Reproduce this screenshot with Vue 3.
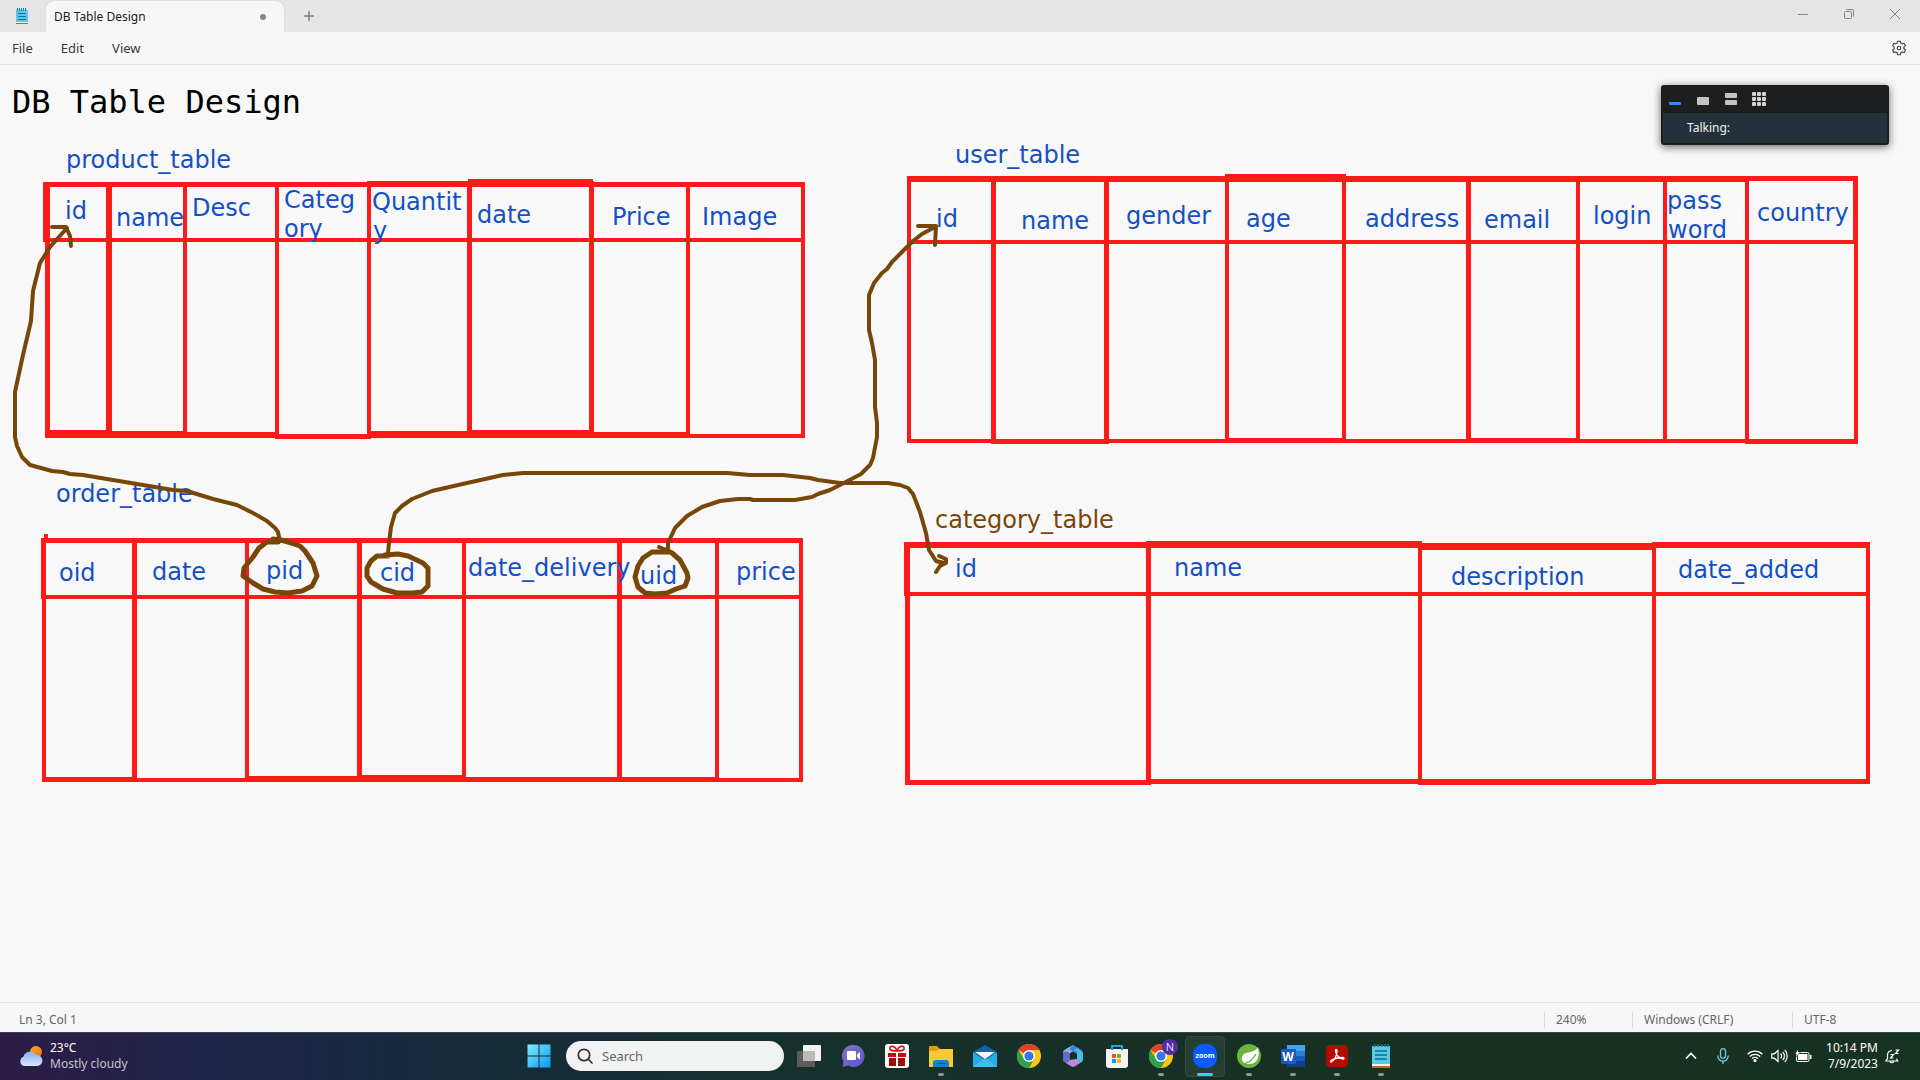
<script setup>
import { ref } from 'vue'

const note = ref('DB Table Design')

// Filled strokes of the red pen: left, top, right, bottom
const strokes = [
  // product_table
  [43, 182, 367, 187], [367, 181, 468, 187], [468, 179, 593, 187], [593, 182, 805, 187],
  [43, 182, 50, 242], [45, 242, 50, 438], [43, 238, 805, 242],
  [106, 182, 112, 438], [183, 182, 187, 438], [275, 182, 279, 439], [367, 181, 371, 439],
  [467, 181, 472, 438], [589, 181, 594, 438], [686, 182, 690, 438], [801, 182, 805, 438],
  [45, 430, 112, 438], [112, 431, 187, 438], [187, 432, 275, 438], [275, 434, 371, 439],
  [371, 431, 467, 438], [467, 430, 594, 438], [594, 432, 690, 438], [690, 434, 805, 438],
  // user_table
  [907, 176, 1745, 182], [1745, 176, 1858, 181], [1225, 174, 1346, 182], [907, 240, 1858, 244],
  [907, 176, 911, 443], [991, 176, 996, 444], [1104, 176, 1109, 444], [1225, 174, 1229, 443],
  [1342, 174, 1346, 443], [1466, 176, 1471, 443], [1576, 176, 1580, 443], [1663, 176, 1667, 443],
  [1745, 176, 1749, 443], [1853, 176, 1858, 242], [1854, 242, 1858, 444],
  [907, 439, 1858, 443], [991, 439, 1109, 444], [1225, 438, 1346, 443], [1466, 438, 1580, 443], [1745, 440, 1858, 444],
  // order_table
  [44, 534, 48, 538], [41, 538, 803, 543], [41, 538, 46, 599], [42, 599, 46, 782], [41, 595, 803, 599],
  [132, 538, 137, 782], [245, 538, 249, 782], [357, 538, 362, 782], [462, 538, 466, 782],
  [617, 538, 622, 782], [715, 538, 719, 782], [799, 538, 803, 782],
  [42, 777, 137, 782], [137, 778, 245, 782], [245, 776, 362, 782], [362, 775, 466, 782],
  [466, 777, 719, 782], [719, 778, 803, 782],
  // category_table
  [904, 542, 1146, 548], [1146, 541, 1422, 548], [1422, 543, 1652, 550], [1652, 542, 1870, 548], [904, 542, 910, 596],
  [905, 596, 910, 784], [904, 592, 1870, 596], [1146, 541, 1151, 785], [1418, 541, 1422, 785],
  [1652, 543, 1656, 785], [1866, 542, 1870, 784],
  [905, 780, 1151, 785], [1146, 779, 1870, 784], [1418, 780, 1656, 785]
]

const labels = [
  { x: 66, y: 168, t: 'product_table' },
  { x: 65, y: 219, t: 'id' }, { x: 116, y: 226, t: 'name' }, { x: 192, y: 216, t: 'Desc' },
  { x: 284, y: 208, t: 'Categ' }, { x: 284, y: 237, t: 'ory' },
  { x: 372, y: 210, t: 'Quantit' }, { x: 373, y: 239, t: 'y' },
  { x: 477, y: 223, t: 'date' }, { x: 612, y: 225, t: 'Price' }, { x: 702, y: 225, t: 'Image' },
  { x: 955, y: 163, t: 'user_table' },
  { x: 936, y: 227, t: 'id' }, { x: 1021, y: 229, t: 'name' }, { x: 1126, y: 224, t: 'gender' },
  { x: 1246, y: 227, t: 'age' }, { x: 1365, y: 227, t: 'address' }, { x: 1484, y: 228, t: 'email' },
  { x: 1593, y: 224, t: 'login' }, { x: 1667, y: 209, t: 'pass' }, { x: 1668, y: 238, t: 'word' },
  { x: 1757, y: 221, t: 'country' },
  { x: 56, y: 502, t: 'order_table' },
  { x: 59, y: 581, t: 'oid' }, { x: 152, y: 580, t: 'date' }, { x: 266, y: 579, t: 'pid' },
  { x: 380, y: 581, t: 'cid' }, { x: 468, y: 576, t: 'date_delivery' }, { x: 640, y: 584, t: 'uid' },
  { x: 736, y: 580, t: 'price' },
  { x: 935, y: 528, t: 'category_table', brown: true },
  { x: 955, y: 577, t: 'id' }, { x: 1174, y: 576, t: 'name' }, { x: 1451, y: 585, t: 'description' },
  { x: 1678, y: 578, t: 'date_added' }
]

const links = [
  '279,537 278,532 275,528 267,521 253,513 237,505 213,499 187,491 173,490 137,484 107,479 83,475 70,474 63,472 52,471 30,465 22,457 17,446 15,437 15,392 18,378 23,355 31,321 33,291 40,263 50,247 67,228',
  '52,227 66,227 70,236 71,246',
  '388,553 389,543 391,527 395,513 402,506 412,499 432,491 467,483 503,475 523,473 727,473 750,475 783,475 810,478 818,480 840,483 888,483 900,485 908,488 913,494 920,512 926,533 929,550 936,561 944,563',
  '939,556 946,559 946,563 940,566 936,572',
  '668,550 668,543 675,528 687,516 702,507 720,501 738,499 750,499 753,500 795,500 812,497 818,494 830,490 840,485 861,474 870,465 873,458 877,437 877,423 875,407 875,360 872,343 869,330 869,295 874,283 882,273 887,269 892,262 902,252 913,241 922,234 935,227',
  '918,226 936,226 935,245',
  '659,547 668,551'
]
const rings = [
  '278,542 267,542 259,548 253,557 244,568 243,576 253,583 263,589 275,592 288,593 302,591 312,586 317,576 313,563 305,551 300,546 288,542 281,540 273,539',
  '388,556 377,556 371,561 367,568 367,576 371,582 383,589 397,593 413,593 422,592 428,586 428,568 423,563 408,556 398,554 385,555',
  '668,552 652,552 643,558 638,566 635,577 638,587 645,593 655,594 667,593 676,589 685,586 688,578 687,573 680,560 672,553 666,550'
]

const running = ['explorer', 'profile', 'zoom', 'spring', 'word', 'acrobat', 'notepad']
const apps = [
  ['taskview', 'Task View'], ['chat', 'Chat'], ['gift', 'Rewards'], ['explorer', 'File Explorer'],
  ['mail', 'Mail'], ['chrome', 'Google Chrome'], ['m365', 'Microsoft 365'], ['store', 'Microsoft Store'],
  ['profile', 'Google Chrome, profile N'], ['zoom', 'Zoom'], ['spring', 'Spring Tool Suite'],
  ['word', 'Word'], ['acrobat', 'Adobe Acrobat'], ['notepad', 'Notepad']
]
</script>

<template>
  <div class="screen">
    <header class="titlebar">
      <svg class="app-icon" viewBox="0 0 12 16" aria-hidden="true">
        <rect y="2" width="12" height="12" fill="#5ac8e6" />
        <path d="M1.500 0v3M3.500 0v3M5.500 0v3M7.500 0v3M9.500 0v3" stroke="#137a9c" />
        <path d="M2 5.500h8M2 8.500h8M2 11.500h8" stroke="#0f6f92" />
        <rect y="14" width="12" height="1" fill="#f6efe8" />
        <rect y="15" width="12" height="1" fill="#b9622a" />
      </svg>
      <div class="tab"><span>DB Table Design</span><i class="dot"></i></div>
      <button class="new-tab" aria-label="New tab">
        <svg width="10" height="10" viewBox="0 0 10 10"><path d="M5 0v10M0 5h10" stroke="#555" fill="none" /></svg>
      </button>
      <div class="window-buttons">
        <button aria-label="Minimize"><svg width="10" height="10" viewBox="0 0 10 10"><path d="M0 5.500h10" stroke="#868686" /></svg></button>
        <button aria-label="Restore"><svg width="10" height="10" viewBox="0 0 10 10" fill="none" stroke="#868686"><rect x=".5" y="2.500" width="7" height="7" rx="1" /><path d="M2.500 .5H8a1.500 1.500 0 0 1 1.500 1.500v5.500" /></svg></button>
        <button aria-label="Close"><svg width="10" height="10" viewBox="0 0 10 10"><path d="M0 0l10 10M10 0L0 10" stroke="#868686" /></svg></button>
      </div>
    </header>

    <nav class="menubar">
      <button>File</button><button>Edit</button><button>View</button>
      <button class="gear" aria-label="Settings">
        <svg width="16" height="16" viewBox="0 0 16 16" fill="none" stroke="#3a3a3a" stroke-width="1.100" stroke-linejoin="round">
          <path d="M6.600 1.200h2.800l.4 1.900 1.300.8 1.900-.7 1.400 2.400-1.500 1.300v1.900l1.500 1.400-1.400 2.400-1.900-.6-1.300.7-.4 2H6.600l-.5-2-1.200-.7-1.900.6-1.400-2.400 1.500-1.400V6.900L1.600 5.600 3 3.200l1.900.7 1.200-.8z" />
          <circle cx="8" cy="8" r="1.800" />
        </svg>
      </button>
    </nav>

    <main class="editor">
      <textarea v-model="note" aria-label="Document text" spellcheck="false"></textarea>
      <svg class="ink" viewBox="0 65 1920 937" preserveAspectRatio="xMinYMin meet">
        <g fill="#ff1a1a">
          <rect v-for="(s, i) in strokes" :key="i" :x="s[0]" :y="s[1]" :width="s[2] - s[0]" :height="s[3] - s[1]" />
        </g>
        <g class="labels">
          <text v-for="l in labels" :key="l.x + l.t" :x="l.x" :y="l.y" :class="{ brown: l.brown }">{{ l.t }}</text>
        </g>
        <g fill="none" stroke="#784608" stroke-width="4" stroke-linecap="round" stroke-linejoin="round">
          <polyline v-for="p in links" :key="p" :points="p" />
          <polyline v-for="p in rings" :key="p" :points="p" stroke-width="5" />
        </g>
      </svg>
      <aside class="meeting">
        <div class="meeting-bar">
          <button aria-label="Hide video"><svg width="14" height="14" viewBox="0 0 14 14"><rect x="1" y="10" width="12" height="3" rx="1" fill="#2d8cff" /></svg></button>
          <button aria-label="Small video"><svg width="14" height="14" viewBox="0 0 14 14"><rect x="1" y="5" width="12" height="8" rx="1" fill="#c4c4c4" /></svg></button>
          <button aria-label="Two videos"><svg width="14" height="14" viewBox="0 0 14 14" fill="#c4c4c4"><rect x="1" y="1" width="12" height="5" rx="1" /><rect x="1" y="8" width="12" height="5" rx="1" /></svg></button>
          <button aria-label="Gallery">
            <svg width="14" height="14" viewBox="0 0 14 14" fill="#d4d4d4">
              <template v-for="r in 3" :key="r"><rect v-for="c in 3" :key="c" :x="c * 5 - 5" :y="r * 5 - 5" width="4" height="4" rx="1" /></template>
            </svg>
          </button>
        </div>
        <p>Talking:</p>
      </aside>
    </main>

    <footer class="status">
      <span class="position">Ln 3, Col 1</span>
      <span class="zoom">240%</span>
      <span class="eol">Windows (CRLF)</span>
      <span class="encoding">UTF-8</span>
    </footer>

    <div class="taskbar">
      <button class="weather">
        <svg width="24" height="20" viewBox="0 0 24 20" aria-hidden="true">
          <defs>
            <linearGradient id="sun" x1="0" y1="0" x2="1" y2="1"><stop stop-color="#f7b51e" /><stop offset="1" stop-color="#ee6a12" /></linearGradient>
            <linearGradient id="cloud" x1="0" y1="0" x2="0" y2="1"><stop stop-color="#86aef2" /><stop offset="1" stop-color="#dbe7fb" /></linearGradient>
          </defs>
          <circle cx="17" cy="6" r="6" fill="url(#sun)" />
          <path d="M5 20a5 5 0 0 1-.4-9.500A6.500 6.500 0 0 1 16.500 9 5.500 5.500 0 0 1 19 20z" fill="url(#cloud)" />
        </svg>
        <span class="weather-text"><b>23°C</b><span>Mostly cloudy</span></span>
      </button>

      <div class="dock">
        <button class="app" aria-label="Start">
          <svg width="24" height="24" viewBox="0 0 24 24">
            <defs><linearGradient id="win" gradientUnits="userSpaceOnUse" x1="0" y1="0" x2="24" y2="24"><stop stop-color="#7ff0ff" /><stop offset="1" stop-color="#0a93f5" /></linearGradient></defs>
            <path d="M.5 .5h11v11H.5zM12.500 .5h11v11h-11zM.5 12.500h11v11H.5zM12.500 12.500h11v11h-11z" fill="url(#win)" />
          </svg>
        </button>
        <label class="search">
          <svg width="16" height="16" viewBox="0 0 16 16" fill="none" stroke="#333" stroke-width="1.700"><circle cx="7" cy="7" r="5.700" /><path d="M11 11l4 4" stroke-linecap="round" /></svg>
          <input type="search" placeholder="Search" aria-label="Search" />
        </label>
        <button v-for="[id, name] in apps" :key="id" class="app" :class="{ running: running.includes(id), active: id === 'zoom' }" :aria-label="name">
          <svg width="24" height="24" viewBox="0 0 24 24">
            <g v-if="id === 'taskview'">
              <rect x="6" y="1" width="18" height="16" rx="1" fill="#f3f3f3" />
              <rect y="7" width="18" height="16" rx="1" fill="#5c5c5c" />
              <rect x="6" y="7" width="12" height="10" fill="#b9bcbb" />
            </g>
            <g v-else-if="id === 'chat'">
              <defs><linearGradient id="chat" x1="0" y1="0" x2="1" y2="1"><stop stop-color="#8d6fb5" /><stop offset="1" stop-color="#5358d6" /></linearGradient></defs>
              <path d="M12.500 1A11 11 0 1 1 7 21.500L1.500 23l1-5.500A11 11 0 0 1 12.500 1z" fill="url(#chat)" />
              <rect x="6" y="7" width="9" height="9" rx="1" fill="#fff" /><path d="M16 10.500l3-2.500v7.500l-3-2.500z" fill="#fff" />
            </g>
            <g v-else-if="id === 'gift'">
              <rect width="24" height="24" rx="3" fill="#fff" />
              <path d="M12 7C10 1 4 1 5 5c.5 2 4 2 7 2zM12 7c2-6 8-6 7-2-.5 2-4 2-7 2z" fill="none" stroke="#d40d0d" stroke-width="1.600" />
              <path d="M3 9h8v4H3zM13 9h8v4h-8z" fill="#c50c0c" /><path d="M4 14h7v8H4zM13 14h7v8h-7z" fill="#a80808" />
            </g>
            <g v-else-if="id === 'explorer'">
              <path d="M0 3a1 1 0 0 1 1-1h7l3 3h12a1 1 0 0 1 1 1v5H0z" fill="#e29c0c" />
              <path d="M0 7h8l2-2h13a1 1 0 0 1 1 1v17H0z" fill="#fcc833" />
              <path d="M4 23v-4a3 3 0 0 1 3-3h10a3 3 0 0 1 3 3v4z" fill="#1283d4" /><path d="M8 19.500h9" stroke="#0c5793" />
            </g>
            <g v-else-if="id === 'mail'">
              <path d="M0 8L12 1l12 7-12 8z" fill="#1463a8" />
              <path d="M0 8l12 8 12-8v15H0z" fill="#24aee8" /><path d="M0 23l12-9 12 9z" fill="#4bc9f2" opacity=".6" />
              <path d="M2 8h20l-10 7z" fill="#f5f8fa" />
            </g>
            <g v-else-if="id === 'chrome' || id === 'profile'">
              <circle cx="12" cy="12" r="12" fill="#fbc615" />
              <path d="M12 12L1.600 6A12 12 0 0 1 22.400 6H12z" fill="#e2402f" />
              <path d="M1.600 6A12 12 0 0 0 12 24l5.200-9L12 12 6.800 15z" fill="#2ba24c" />
              <circle cx="12" cy="12" r="6" fill="#fff" /><circle cx="12" cy="12" r="4.600" fill="#3577e5" />
            </g>
            <g v-else-if="id === 'm365'">
              <path d="M12 1L4 5.500a4 4 0 0 0-2 3.500v6.500a3 3 0 0 0 3 2.500l3.500-2V9.500L15 5.500z" fill="#8db4ee" />
              <path d="M12 1l8 4.500a4 4 0 0 1 2 3.500v4l-6.500-3.500L9 6c0-2.500 1.500-4 3-5z" fill="#3f7fd8" />
              <path d="M22 9v6.500a4 4 0 0 1-2 3L16 16V8l-3-2 3-2z" fill="#49bfe6" />
              <path d="M20 18.500L13.500 22.500a3 3 0 0 1-3 0L4 18.500c2 0 4-1 4.500-2.500l7-1z" fill="#b98ae6" />
              <path d="M2 9c1-2 4-2 6.500 0v7L5 18a3 3 0 0 1-3-2.500z" fill="#6b68c9" />
            </g>
            <g v-else-if="id === 'store'">
              <path d="M7 6V2h10v4" fill="none" stroke="#1ca7ea" stroke-width="2" />
              <path d="M1 5h22v16a3 3 0 0 1-3 3H4a3 3 0 0 1-3-3z" fill="#f2f3f4" />
              <path d="M7 4v2M17 4v2" stroke="#1b86d3" stroke-width="2" />
              <path d="M7 10h4v4H7z" fill="#f25022" /><path d="M12 10h4v4h-4z" fill="#7fba00" /><path d="M7 15h4v4H7z" fill="#00a4ef" /><path d="M12 15h4v4h-4z" fill="#ffb900" />
            </g>
            <g v-else-if="id === 'zoom'">
              <rect width="24" height="24" rx="10" fill="#0b5cff" />
              <text x="12" y="14" class="zoom-word">zoom</text>
            </g>
            <g v-else-if="id === 'spring'">
              <circle cx="12" cy="12" r="12" fill="#6db33f" />
              <path d="M21 3c2 9 0 17-9 17-9 0-9-9-3-11 5-1.500 9-1 12-6z" fill="#fff" /><path d="M4 20c6 0 11-3 15-10" stroke="#6db33f" stroke-width="1.400" fill="none" />
            </g>
            <g v-else-if="id === 'word'">
              <rect x="6" y="1" width="18" height="6" fill="#41a5ee" /><rect x="6" y="7" width="18" height="5" fill="#2b7cd3" /><rect x="6" y="12" width="18" height="6" fill="#185abd" /><rect x="6" y="17" width="18" height="6" fill="#103f91" />
              <rect y="5" width="15" height="15" rx="1" fill="#185abd" /><text x="7" y="17" class="word-letter">W</text>
            </g>
            <g v-else-if="id === 'acrobat'">
              <rect x="1" y="1" width="22" height="22" rx="4" fill="#b30b00" />
              <path d="M6 18c3-1 6-6 6-11 0-2-1.500-2-1.500 0C11 11 15 15 18 15c1.500 0 1-1.500-.5-1.500-4 0-9 1.500-11.500 3z" fill="none" stroke="#fff" stroke-width="1.400" />
            </g>
            <g v-else>
              <rect x="3" y="2" width="18" height="19" fill="#5ac8e6" />
              <path d="M5.500 0v3M9 0v3M12.500 0v3M16 0v3M19 0v3" stroke="#137a9c" stroke-width="1.500" />
              <path d="M6 7h12M6 11h12M6 15h12" stroke="#0f6f92" stroke-width="1.500" />
              <rect x="3" y="20" width="18" height="2" fill="#f6efe8" /><rect x="3" y="22" width="18" height="2" fill="#c06a2e" />
            </g>
          </svg>
          <span v-if="id === 'profile'" class="badge">N</span>
        </button>
      </div>

      <div class="tray">
        <button class="wide" aria-label="Show hidden icons"><svg width="12" height="8" viewBox="0 0 12 8"><path d="M1 6.500l5-5 5 5" fill="none" stroke="#fff" stroke-width="1.600" /></svg></button>
        <button class="wide mic" aria-label="Microphone in use">
          <svg width="12" height="16" viewBox="0 0 12 16" fill="none" stroke="#7cc7dc" stroke-width="1.300"><rect x="3.500" y=".7" width="5" height="9.500" rx="2.500" /><path d="M.8 7.500v.5a5.200 5.200 0 0 0 10.400 0v-.5M6 13.200V16" /></svg>
        </button>
        <button aria-label="Network">
          <svg width="16" height="12" viewBox="0 0 16 12" fill="none" stroke="#fff" stroke-width="1.200"><path d="M.6 4.200a10.500 10.500 0 0 1 14.800 0M2.800 6.500a7.400 7.400 0 0 1 10.400 0M5 8.700a4.200 4.200 0 0 1 6 0" /><circle cx="8" cy="10.500" r="1" fill="#fff" /></svg>
        </button>
        <button aria-label="Volume">
          <svg width="17" height="14" viewBox="0 0 17 14" fill="none" stroke="#fff" stroke-width="1.200"><path d="M.8 4.800h2.500L7 1.500v11L3.300 9.200H.8zM9.500 4.500a3.500 3.500 0 0 1 0 5M11.700 2.800a6 6 0 0 1 0 8.400M13.800 1a8.600 8.600 0 0 1 0 12" /></svg>
        </button>
        <button aria-label="Battery">
          <svg width="17" height="14" viewBox="0 0 17 14"><rect x="1.500" y="3.500" width="12.500" height="9" rx="1.500" fill="none" stroke="#fff" /><rect x="3" y="5" width="9.500" height="6" fill="#fff" /><path d="M15 6h1.500v4H15z" fill="#fff" /><path d="M3 0L0 5h2L1.500 8 5.500 3H3z" fill="#fff" stroke="#173224" stroke-width=".5" /></svg>
        </button>
        <button class="clock"><span>10:14 PM</span><span>7/9/2023</span></button>
        <button aria-label="Notifications, do not disturb">
          <svg width="15" height="15" viewBox="0 0 15 15" fill="none" stroke="#fff" stroke-width="1.200"><path d="M7 1.500C3.500 1.800 2.500 4 2.500 6.500v3L.8 12h11.900l-1.300-2.200M5 12.500a2 2 0 0 0 3.700 0M5.500 5.500h3l-3 3.500h3M10.500 1h3l-3 3.500h3" /></svg>
        </button>
      </div>
    </div>
  </div>
</template>

<style>
body { margin: 0; }
</style>

<style scoped>
.screen {
  display: flex;
  flex-direction: column;
  min-height: 100vh;
  background: #f8f8f8;
  color: #1c1c1c;
  font: 12px/16px "Noto Sans", "Open Sans", sans-serif;
}
button {
  padding: 0;
  border: 0;
  background: none;
  color: inherit;
  font: inherit;
}
svg { display: block; flex: none; }

.titlebar { display: flex; height: 32px; background: #e5e5e5; }
.app-icon { width: 12px; height: 16px; margin: 8px 18px 0 16px; }
.tab {
  display: flex;
  align-items: center;
  justify-content: space-between;
  box-sizing: border-box;
  width: 238px;
  margin-top: 1px;
  padding: 0 18px 0 8px;
  border-radius: 8px 8px 0 0;
  background: #f7f7f7;
  box-shadow: 0 0 1px #aaa;
}
.dot { width: 6px; height: 6px; border-radius: 50%; background: #868686; }
.new-tab { display: grid; place-items: center; width: 40px; margin-left: 5px; }
.window-buttons { display: flex; margin-left: auto; }
.window-buttons button { display: grid; place-items: center; width: 46px; padding-bottom: 4px; }

.window-buttons { padding-right: 2px; }

.menubar {
  display: flex;
  align-items: center;
  gap: 28px;
  height: 32px;
  padding: 0 13px 0 12px;
  border-bottom: 1px solid #e5e5e5;
  background: #f7f7f7;
  font-size: 13px;
  color: #3a3a3a;
}
.gear { margin-left: auto; }

.editor { position: relative; display: grid; flex: 1; }
.editor > textarea, .ink { grid-area: 1 / 1; }
.editor > textarea {
  width: 100%;
  box-sizing: border-box;
  padding: 17px 12px;
  border: 0;
  outline: 0;
  resize: none;
  background: transparent;
  color: #000;
  font: 32px/40px "DejaVu Sans Mono", monospace;
}
.ink { position: relative; width: 100%; height: auto; pointer-events: none; }
.labels { font: 24px "DejaVu Sans", sans-serif; fill: #1450c4; }
.labels .brown { fill: #784608; }

.meeting {
  position: absolute;
  top: 20px;
  right: 31px;
  box-sizing: border-box;
  width: 228px;
  padding: 0 2px 2px;
  border-radius: 3px;
  background: #1c1e20;
  box-shadow: 0 2px 8px rgba(0, 0, 0, .6);
  color: #f2f2f2;
}
.meeting-bar { display: flex; align-items: center; gap: 14px; height: 28px; padding-left: 5px; }
.meeting p { margin: 0; padding: 7px 24px; background: #26303a; }

.status {
  display: flex;
  height: 29px;
  border-top: 1px solid #e5e5e5;
  background: #f7f7f7;
  color: #666;
  line-height: 34px;
}
.status span { box-sizing: border-box; padding-left: 12px; background: linear-gradient(#dedede, #dedede) 0 9px / 1px 16px no-repeat; }
.status .position { flex: 1; padding-left: 19px; background: none; }
.zoom { width: 88px; }
.eol { width: 160px; }
.encoding { width: 128px; }

.taskbar {
  display: grid;
  grid-template-columns: 1fr auto 1fr;
  box-sizing: border-box;
  height: 48px;
  padding-bottom: 1px;
  border-top: 1px solid #3a474c;
  background: linear-gradient(90deg, #2c1c45 0, #20234a 10%, #152a3d 21%, #16302f 38%, #173023 65%, #163222 100%);
  color: #fff;
}
.weather { display: flex; align-items: center; justify-self: start; gap: 7px; padding-left: 19px; text-align: left; }
.weather-text, .weather-text > * { display: block; }
.weather-text b { font-weight: 400; }
.weather-text span { color: #c4c4d2; }

.dock { display: flex; align-items: center; }
.app { position: relative; display: grid; place-items: center; width: 44px; height: 46px; }
.app.running::after {
  content: "";
  position: absolute;
  bottom: 3px;
  left: 19px;
  width: 6px;
  height: 3px;
  border-radius: 2px;
  background: #8f9a94;
}
.app.active::before {
  content: "";
  position: absolute;
  inset: 3px 2px 2px;
  box-sizing: border-box;
  border: 1px solid #354a40;
  border-radius: 4px;
  background: #263d34;
}
.app.active svg { position: relative; }
.app.active.running::after { left: 14px; width: 16px; background: #4cc2ff; }
.zoom-word { font: 700 7px "Noto Sans", sans-serif; fill: #fff; text-anchor: middle; }
.word-letter { font: 700 12px "Noto Sans", sans-serif; fill: #fff; text-anchor: middle; }
.badge {
  position: absolute;
  top: 6px;
  right: 5px;
  width: 16px;
  border-radius: 50%;
  background: #512da8;
  color: #e6dcf8;
  font-size: 11px;
  line-height: 16px;
}
.search {
  display: flex;
  align-items: center;
  gap: 9px;
  box-sizing: border-box;
  width: 218px;
  height: 30px;
  margin: 0 3px 0 5px;
  padding: 0 11px;
  border-radius: 15px;
  background: #f1f3f2;
}
.search input {
  width: 100%;
  min-width: 0;
  padding: 0;
  border: 0;
  outline: 0;
  background: none;
  font: 13px/20px "Noto Sans", sans-serif;
}
.search input::placeholder { color: #666; opacity: 1; }

.tray { display: flex; justify-content: flex-end; padding-right: 16px; }
.tray button { display: grid; place-items: center; width: 24px; }
.tray .wide { width: 32px; }
.tray .mic { margin-right: 4px; }
.tray .clock { display: flex; flex-direction: column; justify-content: center; align-items: flex-end; box-sizing: border-box; width: 65px; padding-right: 2px; }
</style>
